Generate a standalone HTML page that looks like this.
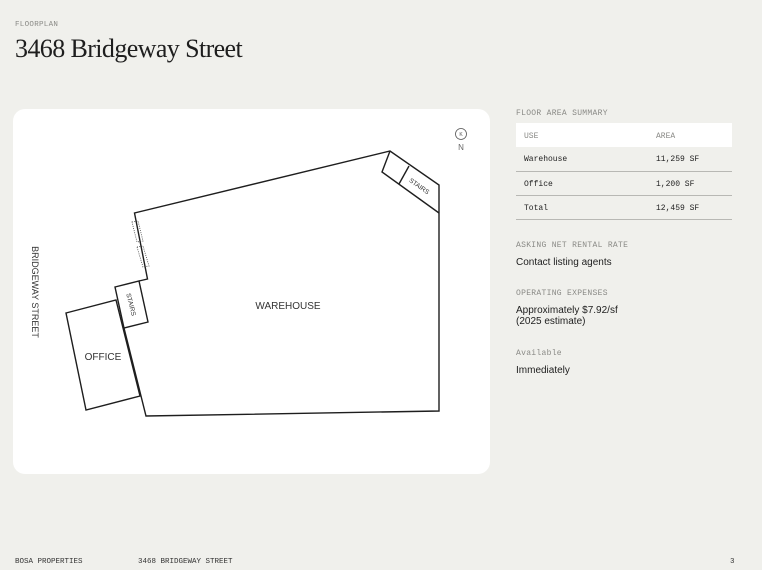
<!DOCTYPE html>
<html><head><meta charset="utf-8"><style>
*{margin:0;padding:0;box-sizing:border-box}
body{width:762px;height:570px;background:#f0f0ec;position:relative;overflow:hidden;font-family:"Liberation Sans",sans-serif;color:#1e1e1e}
.mono{font-family:"Liberation Mono",monospace}
.abs{position:absolute}
.lbl{font-family:"Liberation Mono",monospace;font-size:8px;color:#8a8a86;letter-spacing:0.3px}
.card{left:13px;top:109px;width:477px;height:365px;background:#fff;border-radius:12px}
table{border-collapse:collapse;width:216px}
td{font-family:"Liberation Mono",monospace;font-size:8px;height:24px;padding-left:8px;padding-top:2px;border-bottom:1px solid #b8b8b4;color:#222}
tr.h td{background:#fff;color:#8a8a86;border-bottom:none}
.v{font-size:10px;color:#1e1e1e;line-height:11px}
</style></head><body>
<div class="abs lbl" style="left:15px;top:21px;font-size:7.5px">FLOORPLAN</div>
<div class="abs" style="left:15px;top:34px;font-family:'Liberation Serif',serif;font-size:26px;letter-spacing:-0.6px;color:#1e1e1e">3468 Bridgeway Street</div>
<div class="abs card"></div>
<svg class="abs" style="left:0;top:0" width="762" height="570" viewBox="0 0 762 570">
<g fill="none" stroke="#1e1e1e" stroke-width="1.4">
<polyline points="124,328 146,416 439,411 439,185 390,151 134.5,213 147.5,279 139,281"/>
<polygon points="115,287 139,281 148,322 124,328"/>
<polygon points="66,313 116,300 140,396 86,410"/>
<polyline points="390,151 382,172 439,213"/>
<line x1="409" y1="166" x2="399" y2="184"/>
</g>
<g fill="none" stroke="#444" stroke-width="0.8" stroke-dasharray="1,1.2">
<polygon points="132,222 138,221 143,241 137,242"/>
<polygon points="137,247 143,246 149,266 143,267"/>
</g>
<circle cx="461" cy="134" r="5.5" fill="none" stroke="#555" stroke-width="0.8"/>
<text x="461" y="136" font-size="5" fill="#555" text-anchor="middle" font-family="Liberation Sans">K</text>
<text x="461" y="150" font-size="8" fill="#666" text-anchor="middle" font-family="Liberation Sans">N</text>
<text x="288" y="309" font-size="10" fill="#333" text-anchor="middle" font-family="Liberation Sans">WAREHOUSE</text>
<text x="103" y="360" font-size="10" fill="#333" text-anchor="middle" font-family="Liberation Sans">OFFICE</text>
<text font-size="6.5" fill="#333" font-family="Liberation Sans" text-anchor="middle" transform="translate(129,305) rotate(76)">STAIRS</text>
<text font-size="6.5" fill="#333" font-family="Liberation Sans" text-anchor="middle" transform="translate(418,188) rotate(35)">STAIRS</text>
<text font-size="9" fill="#333" font-family="Liberation Sans" text-anchor="middle" transform="translate(32,292) rotate(90)">BRIDGEWAY STREET</text>
</svg>
<div class="abs lbl" style="left:516px;top:109px">FLOOR AREA SUMMARY</div>
<table class="abs" style="left:516px;top:123px">
<tr class="h"><td style="width:132px">USE</td><td>AREA</td></tr>
<tr><td>Warehouse</td><td>11,259 SF</td></tr>
<tr><td>Office</td><td>1,200 SF</td></tr>
<tr><td>Total</td><td>12,459 SF</td></tr>
</table>
<div class="abs lbl" style="left:516px;top:241px">ASKING NET RENTAL RATE</div>
<div class="abs v" style="left:516px;top:257px">Contact listing agents</div>
<div class="abs lbl" style="left:516px;top:289px">OPERATING EXPENSES</div>
<div class="abs v" style="left:516px;top:305px">Approximately $7.92/sf<br>(2025 estimate)</div>
<div class="abs lbl" style="left:516px;top:349px">Available</div>
<div class="abs v" style="left:516px;top:365px">Immediately</div>
<div class="abs mono" style="left:15px;top:558px;font-size:7.5px;color:#333">BOSA PROPERTIES</div>
<div class="abs mono" style="left:138px;top:558px;font-size:7.5px;color:#333">3468 BRIDGEWAY STREET</div>
<div class="abs mono" style="left:730px;top:558px;font-size:7.5px;color:#333">3</div>
</body></html>
